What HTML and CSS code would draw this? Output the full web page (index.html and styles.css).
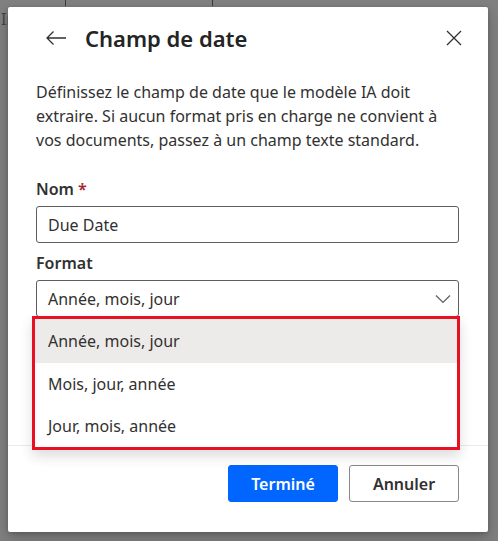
FILE: index.html
```html
<!DOCTYPE html>
<html lang="fr">
<head>
<meta charset="utf-8">
<link rel="stylesheet" href="styles.css">
</head>
<body>
<div class="backdrop">
  <span class="bg-text">Ir</span>
  <span class="bg-line l1"></span>
  <span class="bg-line l2"></span>
</div>
<div class="dialog">
  <div class="header">
    <button class="icon-btn back" aria-label="Retour">
      <svg width="22" height="16" viewBox="0 0 22 16"><path d="M21 8H2M8.5 1.5L2 8l6.5 6.5" fill="none" stroke="#323130" stroke-width="1.3"/></svg>
    </button>
    <h1 class="title">Champ de date</h1>
    <button class="icon-btn close" aria-label="Fermer">
      <svg width="16" height="16" viewBox="0 0 16 16"><path d="M1 1l14 14M15 1L1 15" fill="none" stroke="#323130" stroke-width="1.3"/></svg>
    </button>
  </div>
  <p class="desc">Définissez le champ de date que le modèle IA doit extraire. Si aucun format pris en charge ne convient à vos documents, passez à un champ texte standard.</p>
  <label class="label lbl-nom">Nom <span class="req">*</span></label>
  <div class="input">Due Date</div>
  <label class="label lbl-format">Format</label>
  <div class="select">
    <span>Année, mois, jour</span>
    <svg width="16" height="10" viewBox="0 0 16 10"><path d="M1 1.5l7 7 7-7" fill="none" stroke="#605e5c" stroke-width="1.2"/></svg>
  </div>
  <div class="spacer"></div>
  <div class="footer">
    <button class="btn primary">Terminé</button>
    <button class="btn secondary">Annuler</button>
  </div>
  <div class="dropdown">
    <div class="option selected">Année, mois, jour</div>
    <div class="option">Mois, jour, année</div>
    <div class="option">Jour, mois, année</div>
  </div>
</div>
</body>
</html>
```

FILE: styles.css
```css
* { box-sizing: border-box; }
html, body { margin: 0; padding: 0; }
body {
  width: 498px;
  height: 541px;
  overflow: hidden;
  background: #808080;
  position: relative;
  font-family: "Noto Sans", "Open Sans", sans-serif;
  color: #323130;
}
.backdrop { position: absolute; inset: 0; }
.bg-text {
  position: absolute; left: 1px; top: 8px;
  font-size: 16px; color: #444;
}
.bg-line { position: absolute; top: 0; width: 1px; height: 6px; background: #3a3a3a; }
.l1 { left: 65px; }
.l2 { left: 212px; }

.dialog {
  position: absolute;
  left: 8px; top: 7px;
  width: 480px; height: 525px;
  background: #fff;
  border-radius: 2px;
  box-shadow: 0 6px 14px rgba(0,0,0,0.22), 0 1px 4px rgba(0,0,0,0.18);
  display: flex;
  flex-direction: column;
}
.header {
  display: flex;
  align-items: center;
  height: 56px;
  padding: 6px 29px 0 37px;
}
.icon-btn {
  border: 0; background: none; padding: 0; margin: 0;
  display: flex; align-items: center; justify-content: center;
}
.back { width: 22px; height: 22px; margin-right: 18px; }
.close { width: 22px; height: 22px; margin-left: auto; margin-right: -6px; }
.title {
  margin: 0;
  font-size: 22px;
  font-weight: 600;
  line-height: 28px;
  color: #242424;
}
.desc {
  margin: 17px 28px 0 28px;
  font-size: 16px;
  line-height: 24px;
}
.label {
  display: block;
  font-size: 16px;
  font-weight: 600;
  line-height: 20px;
  margin: 0 28px;
}
.lbl-nom { margin-top: 27px; }
.lbl-format { margin-top: 10px; }
.req { color: #a4262c; font-weight: 600; }
.input, .select {
  margin: 7px 29px 0 28px;
  height: 37px;
  border: 1px solid #605e5c;
  border-radius: 3px;
  font-size: 16px;
  padding: 0 11px;
  display: flex;
  align-items: center;
}
.select { justify-content: space-between; padding-right: 7px; }
.spacer { flex: 1; }
.footer {
  border-top: 1px solid #edebe9;
  height: 87px;
  padding: 19px 29px 0 0;
  display: flex;
  justify-content: flex-end;
  gap: 11px;
}
.btn {
  width: 110px; height: 37px;
  border-radius: 3px;
  font-family: inherit;
  font-size: 16px;
  font-weight: 600;
  cursor: pointer;
}
.primary { background: #0066ff; color: #fff; border: 1px solid #0066ff; }
.secondary { background: #fff; color: #323130; border: 1px solid #8a8886; }

.dropdown {
  position: absolute;
  left: 24px; top: 309px;
  width: 428px; height: 134px;
  background: #fff;
  border: 3px solid #e81123;
  box-shadow: 0 6px 12px rgba(0,0,0,0.14);
  display: flex;
  flex-direction: column;
}
.option {
  height: 43px;
  font-size: 16px;
  display: flex;
  align-items: center;
  padding-left: 13px;
}
.option.selected { background: #edebe9; height: 45px; padding-top: 1px; }
```
